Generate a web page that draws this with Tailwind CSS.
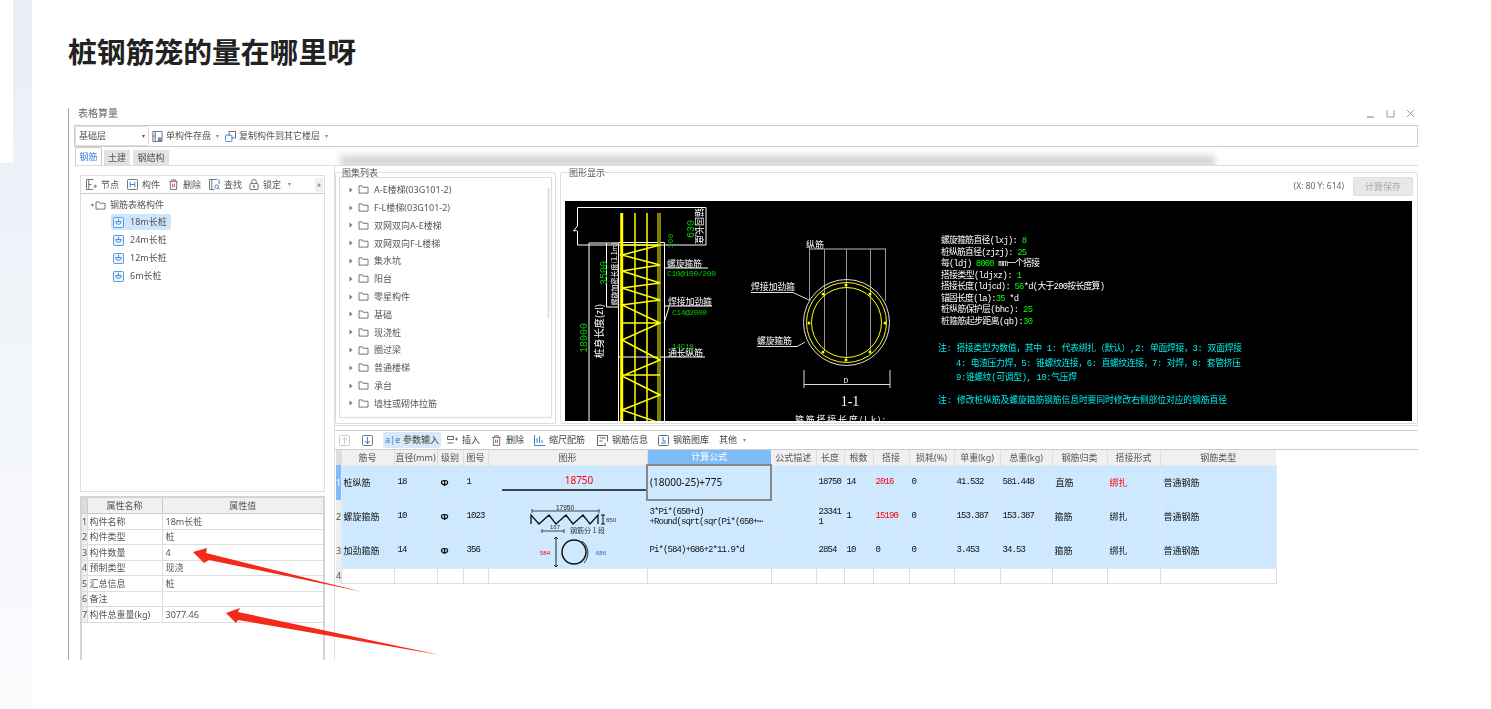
<!DOCTYPE html>
<html lang="zh">
<head>
<meta charset="UTF-8">
<title>桩钢筋笼的量在哪里呀</title>
<script src="https://cdn.jsdelivr.net/npm/@tailwindcss/browser@4"></script>
</head>
<body class="bg-white font-['Noto_Sans','Noto_Sans_CJK_SC',sans-serif] text-[9px] text-[#555]">

<svg class="hidden">
  <symbol id="folder" viewBox="0 0 12 10"><path d="M1 1h3.500l1 1.500H11V9H1z" fill="none" stroke="#666" stroke-width="1"/></symbol>
  <symbol id="caret" viewBox="0 0 4 6"><path d="M0.500 0.500L3.500 3L0.500 5.500z" fill="#777"/></symbol>
  <symbol id="pile" viewBox="0 0 12 12"><rect x="0.500" y="0.500" width="11" height="11" rx="1" fill="#e8f3ff" stroke="#4a90d9"/><path d="M6 2v3M3 5h6M3 5a3 3 0 0 0 6 0" fill="none" stroke="#3b82c4"/></symbol>
  <symbol id="save" viewBox="0 0 12 12"><path d="M1 .5h10v11H1zM3.500 .5v11M1 5.500h2.500" fill="none" stroke="#666"/><rect x="6.500" y="7" width="4" height="4" fill="#4a90d9"/></symbol>
  <symbol id="copy" viewBox="0 0 12 12"><rect x="4.500" y=".5" width="7" height="7" fill="#fff" stroke="#666"/><rect x=".5" y="4.500" width="7" height="7" rx="1" fill="#fff" stroke="#2f7fd0"/></symbol>
  <symbol id="trash" viewBox="0 0 10 12"><path d="M.5 2.500h9M3 2.500V.8h4v1.700M1.500 2.500v9h7v-9" fill="none" stroke="#666"/><path d="M4 5v4M6 5v4" stroke="#d33" stroke-width="1"/></symbol>
  <symbol id="node" viewBox="0 0 12 12"><path d="M8 .5H.5v11H8M3 .5v11M3 6h3" fill="none" stroke="#666"/><path d="M8 8h4M10 6v4" stroke="#3b82c4"/></symbol>
  <symbol id="part" viewBox="0 0 12 12"><rect x=".5" y=".5" width="11" height="11" rx="1" fill="none" stroke="#666"/><path d="M3.500 3v6M8.500 3v6M3.500 6h5" stroke="#3b82c4" fill="none"/></symbol>
  <symbol id="find" viewBox="0 0 12 12"><path d="M9 .5H.5v11H6M3 .5v11M11 .5v5" fill="none" stroke="#666"/><circle cx="8.500" cy="8.500" r="2" fill="none" stroke="#3b82c4"/><path d="M10 10l1.500 1.500" stroke="#3b82c4"/></symbol>
  <symbol id="lock" viewBox="0 0 10 12"><rect x=".5" y="5" width="9" height="6.500" rx="1" fill="none" stroke="#666"/><path d="M2.500 5V3a2.500 2.500 0 0 1 5 0v2" fill="none" stroke="#666"/><rect x="4" y="7" width="2" height="2.500" fill="#3b82c4"/></symbol>
</svg>

<div class="relative flex h-[709px] overflow-hidden">
  <!-- left rail -->
  <div class="w-[32px] shrink-0 bg-gradient-to-b from-[#e9eef6] to-[#fafbfd]">
    <div class="h-[163px] w-[13px] bg-white"></div>
  </div>

  <div class="pl-[36px]">
    <h1 class="h-[40px] mt-[32px] text-[28.800px] leading-[40px] font-bold text-[#222]">桩钢筋笼的量在哪里呀</h1>

    <!-- pasted app window -->
    <div class="mt-[36px] flex h-[552px] w-[1350px] flex-col overflow-hidden border-l border-[#aaa] pl-[5px] blur-[0.25px]">
      <div class="flex h-[17px] shrink-0 items-start justify-between pl-[4px] pr-[3px] text-[#666]">
        <span class="text-[10px] leading-[11px]">表格算量</span>
        <div class="flex items-center gap-[11px] pt-[1px]">
          <svg class="h-[9px] w-[9px]" viewBox="0 0 9 9"><path d="M1 8h7" stroke="#777"/></svg>
          <svg class="h-[9px] w-[9px]" viewBox="0 0 9 9"><path d="M1 1v7h7V1" fill="none" stroke="#999"/></svg>
          <svg class="h-[9px] w-[9px]" viewBox="0 0 9 9"><path d="M1 1l7 7M8 1l-7 7" stroke="#999"/></svg>
        </div>
      </div>

      <!-- top toolbar -->
      <div class="flex h-[22px] shrink-0 items-center border border-[#ccc]">
        <div class="flex h-[20px] w-[74px] items-center justify-between rounded-[2px] border border-[#ddd] pl-[3px] pr-[3px]">
          <span>基础层</span><span class="text-[6px]">▾</span>
        </div>
        <svg class="ml-[3px] h-[11px] w-[11px]"><use href="#save"/></svg>
        <span class="ml-[3px]">单构件存盘</span><span class="ml-[5px] text-[6px] text-[#888]">▾</span>
        <svg class="ml-[6px] h-[11px] w-[11px]"><use href="#copy"/></svg>
        <span class="ml-[3px]">复制构件到其它楼层</span><span class="ml-[5px] text-[6px] text-[#888]">▾</span>
      </div>

      <!-- tabs -->
      <div class="flex h-[18px] shrink-0 items-end overflow-hidden pl-[1px]">
        <div class="flex h-[18px] w-[27px] items-center justify-center rounded-t-[2px] border border-b-0 border-[#ccc] text-[#3b82d8]">钢筋</div>
        <div class="ml-[2px] flex h-[15px] w-[26px] items-center justify-center bg-[#e2e2e2]">土建</div>
        <div class="ml-[3px] flex h-[15px] w-[36px] items-center justify-center bg-[#e2e2e2]">钢结构</div>
        <div class="ml-[171px] -mb-[3px] h-[13px] w-[875px] bg-[#d8d8d8] blur-[3px]"></div>
      </div>

      <!-- body -->
      <div class="flex min-h-0 flex-1 border-t border-[#ddd] bg-white">
        <!-- left column -->
        <div class="flex w-[261px] shrink-0 flex-col border-r border-[#ddd] pl-[6px] pr-[9px] pt-[9px]">
          <div class="flex h-[317px] shrink-0 flex-col border border-[#ddd]">
            <div class="flex h-[18px] shrink-0 items-center border-b border-[#ccc] pl-[5px]">
              <svg class="h-[11px] w-[11px]"><use href="#node"/></svg><span class="ml-[4px]">节点</span>
              <svg class="ml-[8px] h-[11px] w-[11px]"><use href="#part"/></svg><span class="ml-[4px]">构件</span>
              <svg class="ml-[9px] h-[11px] w-[9px]"><use href="#trash"/></svg><span class="ml-[5px]">删除</span>
              <svg class="ml-[8px] h-[11px] w-[11px]"><use href="#find"/></svg><span class="ml-[4px]">查找</span>
              <svg class="ml-[7px] h-[11px] w-[10px]"><use href="#lock"/></svg><span class="ml-[4px]">锁定</span>
              <span class="ml-[7px] text-[6px] text-[#888]">▾</span>
              <span class="ml-auto mr-[1px] flex h-[14px] w-[8px] items-center justify-center bg-[#f0f0f0] text-[7px] leading-none">»</span>
            </div>
            <div class="flex h-[20px] items-center pl-[10px] pt-[2px]">
              <span class="text-[6px] text-[#777]">▾</span>
              <svg class="ml-[1px] h-[9px] w-[11px]"><use href="#folder"/></svg>
              <span class="ml-[4px]">钢筋表格构件</span>
            </div>
            <div class="ml-[30px] flex h-[16px] w-[60px] items-center rounded-[2px] bg-[#cfe5fb] pl-[2px]"><svg class="h-[11px] w-[11px]"><use href="#pile"/></svg><span class="ml-[6px]">18m长桩</span></div>
            <div class="ml-[30px] mt-[2px] flex h-[16px] items-center pl-[2px]"><svg class="h-[11px] w-[11px]"><use href="#pile"/></svg><span class="ml-[6px]">24m长桩</span></div>
            <div class="ml-[30px] mt-[2px] flex h-[16px] items-center pl-[2px]"><svg class="h-[11px] w-[11px]"><use href="#pile"/></svg><span class="ml-[6px]">12m长桩</span></div>
            <div class="ml-[30px] mt-[2px] flex h-[16px] items-center pl-[2px]"><svg class="h-[11px] w-[11px]"><use href="#pile"/></svg><span class="ml-[6px]">6m长桩</span></div>
          </div>

          <div class="mt-[4px] flex-1 border-x-2 border-t-2 border-[#d4d4d4]">
            <table class="w-full table-fixed border-collapse">
              <colgroup><col class="w-[5px]"><col class="w-[75px]"><col></colgroup>
              <tr class="h-[15.500px] bg-[#f0f0f0]"><th class="border-b border-r border-[#ccc] bg-[#ddd]"></th><th class="border-b border-r border-[#ccc] font-normal">属性名称</th><th class="border-b border-[#ccc] font-normal">属性值</th></tr>
              <tr class="h-[15.500px]"><td class="overflow-hidden border-b border-r border-[#ddd] bg-[#eee]">1</td><td class="border-b border-r border-[#ddd] pl-[2px]">构件名称</td><td class="border-b border-[#ddd] pl-[3px]">18m长桩</td></tr>
              <tr class="h-[15.500px]"><td class="overflow-hidden border-b border-r border-[#ddd] bg-[#eee]">2</td><td class="border-b border-r border-[#ddd] pl-[2px]">构件类型</td><td class="border-b border-[#ddd] pl-[3px]">桩</td></tr>
              <tr class="h-[15.500px]"><td class="overflow-hidden border-b border-r border-[#ddd] bg-[#eee]">3</td><td class="border-b border-r border-[#ddd] pl-[2px]">构件数量</td><td class="border-b border-[#ddd] pl-[3px]">4</td></tr>
              <tr class="h-[15.500px]"><td class="overflow-hidden border-b border-r border-[#ddd] bg-[#eee]">4</td><td class="border-b border-r border-[#ddd] pl-[2px]">预制类型</td><td class="border-b border-[#ddd] pl-[3px]">现浇</td></tr>
              <tr class="h-[15.500px]"><td class="overflow-hidden border-b border-r border-[#ddd] bg-[#eee]">5</td><td class="border-b border-r border-[#ddd] pl-[2px]">汇总信息</td><td class="border-b border-[#ddd] pl-[3px]">桩</td></tr>
              <tr class="h-[15.500px]"><td class="overflow-hidden border-b border-r border-[#ddd] bg-[#eee]">6</td><td class="border-b border-r border-[#ddd] pl-[2px]">备注</td><td class="border-b border-[#ddd] pl-[3px]"></td></tr>
              <tr class="h-[15.500px]"><td class="overflow-hidden border-b border-r border-[#ddd] bg-[#eee]">7</td><td class="border-b border-r border-[#ddd] pl-[2px]">构件总重量(kg)</td><td class="border-b border-[#ddd] pl-[3px]">3077.46</td></tr>
            </table>
          </div>
        </div>

        <!-- right column -->
        <div class="flex min-w-0 flex-1 flex-col">
          <div class="flex h-[260px] shrink-0 gap-[4px] border-b border-[#ddd] pt-[2px]">
            <!-- atlas list -->
            <fieldset class="mb-[1px] w-[221px] shrink-0 rounded-[2px] border border-[#ddd] px-[3px] pb-[5px]">
              <legend class="ml-[3px] h-[9px] leading-[9px]">图集列表</legend>
              <div class="relative h-full overflow-hidden border border-[#ddd] pl-[9px] pt-[3px]">
                <div class="absolute left-[207px] top-[10px] h-[130px] w-[3px] bg-[#e8e8e8]"></div>
                <div class="flex h-[17.800px] items-center gap-[5px]"><svg class="h-[6px] w-[4px]"><use href="#caret"/></svg><svg class="h-[9px] w-[11px]"><use href="#folder"/></svg><span>A-E楼梯(03G101-2)</span></div>
                <div class="flex h-[17.800px] items-center gap-[5px]"><svg class="h-[6px] w-[4px]"><use href="#caret"/></svg><svg class="h-[9px] w-[11px]"><use href="#folder"/></svg><span>F-L楼梯(03G101-2)</span></div>
                <div class="flex h-[17.800px] items-center gap-[5px]"><svg class="h-[6px] w-[4px]"><use href="#caret"/></svg><svg class="h-[9px] w-[11px]"><use href="#folder"/></svg><span>双网双向A-E楼梯</span></div>
                <div class="flex h-[17.800px] items-center gap-[5px]"><svg class="h-[6px] w-[4px]"><use href="#caret"/></svg><svg class="h-[9px] w-[11px]"><use href="#folder"/></svg><span>双网双向F-L楼梯</span></div>
                <div class="flex h-[17.800px] items-center gap-[5px]"><svg class="h-[6px] w-[4px]"><use href="#caret"/></svg><svg class="h-[9px] w-[11px]"><use href="#folder"/></svg><span>集水坑</span></div>
                <div class="flex h-[17.800px] items-center gap-[5px]"><svg class="h-[6px] w-[4px]"><use href="#caret"/></svg><svg class="h-[9px] w-[11px]"><use href="#folder"/></svg><span>阳台</span></div>
                <div class="flex h-[17.800px] items-center gap-[5px]"><svg class="h-[6px] w-[4px]"><use href="#caret"/></svg><svg class="h-[9px] w-[11px]"><use href="#folder"/></svg><span>零星构件</span></div>
                <div class="flex h-[17.800px] items-center gap-[5px]"><svg class="h-[6px] w-[4px]"><use href="#caret"/></svg><svg class="h-[9px] w-[11px]"><use href="#folder"/></svg><span>基础</span></div>
                <div class="flex h-[17.800px] items-center gap-[5px]"><svg class="h-[6px] w-[4px]"><use href="#caret"/></svg><svg class="h-[9px] w-[11px]"><use href="#folder"/></svg><span>现浇桩</span></div>
                <div class="flex h-[17.800px] items-center gap-[5px]"><svg class="h-[6px] w-[4px]"><use href="#caret"/></svg><svg class="h-[9px] w-[11px]"><use href="#folder"/></svg><span>圈过梁</span></div>
                <div class="flex h-[17.800px] items-center gap-[5px]"><svg class="h-[6px] w-[4px]"><use href="#caret"/></svg><svg class="h-[9px] w-[11px]"><use href="#folder"/></svg><span>普通楼梯</span></div>
                <div class="flex h-[17.800px] items-center gap-[5px]"><svg class="h-[6px] w-[4px]"><use href="#caret"/></svg><svg class="h-[9px] w-[11px]"><use href="#folder"/></svg><span>承台</span></div>
                <div class="flex h-[17.800px] items-center gap-[5px]"><svg class="h-[6px] w-[4px]"><use href="#caret"/></svg><svg class="h-[9px] w-[11px]"><use href="#folder"/></svg><span>墙柱或砌体拉筋</span></div>
                <div class="flex h-[17.800px] items-center gap-[5px]"><svg class="h-[6px] w-[4px]"><use href="#caret"/></svg><svg class="h-[9px] w-[11px]"><use href="#folder"/></svg><span>构造柱</span></div>
              </div>
            </fieldset>

            <!-- drawing -->
            <fieldset class="mb-[1px] min-w-0 flex-1 rounded-[2px] border border-[#ddd] px-[4px]">
              <legend class="ml-[4px] h-[9px] leading-[9px]">图形显示</legend>
              <div class="flex h-[20px] items-center justify-end gap-[9px] pb-[1px]">
                <span class="text-[8.500px] text-[#666]">(X: 80 Y: 614)</span>
                <span class="flex h-[19px] w-[60px] items-center justify-center rounded-[2px] border border-[#ddd] bg-[#e8e8e8] text-[#aaa]">计算保存</span>
              </div>
              <svg class="mt-[4px] block h-[220px] w-[847px] bg-black" viewBox="0 0 847 220">
                <!-- pile elevation -->
                <g stroke="#fff" fill="none" stroke-width="1">
                  <path d="M12.500 6.500H141M12.500 44H141M141 6.500V44M12.500 6.500V25l-4 5 3-.5 1 .5V44"/>
                  <path d="M53.500 220V41.500H99.500V220M24 42V220M24 42H53M41.500 42V106H53"/>
                  <path d="M99 67H143M99 105H147M99 122L104 106M53 156H140"/>
                </g>
                <g stroke="#ff0" fill="none">
                  <path d="M56.700 12V220M94 12V220" stroke-width="3"/>
                  <path d="M70 12V220M82 12V220" stroke-width="1.500"/>
                  <path d="M94 12V220" stroke="#000" stroke-width="1"/>
                  <path d="M57 54L95 44L57 54L95 64L57 70L95 82L57 87L95 99L57 104L95 122L57 139L95 159L57 175L95 194L57 209L95 222M57 44H95M57 122H95M57 174H95M57 221H95" stroke-width="1.500"/>
                </g>
                <g fill="#0c0" font-size="9" font-family="Liberation Mono, monospace">
                  <text transform="translate(129,28) rotate(-90)" text-anchor="middle" font-size="10">630</text>
                  <text transform="translate(107,40) rotate(-90)" font-size="8" text-anchor="middle" y="1">100</text>
                  <text transform="translate(42,72) rotate(-90)" text-anchor="middle" font-size="10">3500</text>
                  <text transform="translate(22,137) rotate(-90)" text-anchor="middle" font-size="10">18000</text>
                  <text x="102" y="75" font-size="8" textLength="49">C10@100/200</text>
                  <text x="107" y="114" font-size="8" textLength="35">C14@2000</text>
                  <text x="107" y="148" font-size="8" textLength="22">14C18</text>
                </g>
                <g fill="#fff" font-size="9" font-family="Noto Sans CJK SC, sans-serif">
                  <text transform="translate(38,130) rotate(-90)" text-anchor="middle" font-size="10">桩身长度(zl)</text>
                  <text transform="translate(52,73) rotate(-90)" text-anchor="middle" font-size="7">螺旋加密长度(1.1m)</text>
                  <text transform="translate(131,25) rotate(90)" text-anchor="middle" font-size="9" textLength="36">锚固长度</text>
                  <text x="102" y="66" textLength="35">螺旋箍筋</text>
                  <text x="103" y="104" textLength="44">焊接加劲箍</text>
                  <text x="103" y="155" textLength="35">通长纵筋</text>
                  <text x="241" y="47">纵筋</text>
                  <text x="186" y="89" textLength="44">焊接加劲箍</text>
                  <text x="192" y="143" textLength="35">螺旋箍筋</text>
                  <text x="230" y="222" textLength="90">箍筋搭接长度(Lk):</text>
                </g>
                <!-- section 1-1 -->
                <g fill="none">
                  <path d="M244.500 48V100M259.500 48V150M281.500 48V160M305.500 48V150M320.500 48V100" stroke="#999"/>
                  <path d="M244 48H321" stroke="#bbb"/>
                  <path d="M186 91.500H228L244 99M192 145.500H232L240 141" stroke="#ddd"/>
                  <circle cx="281.500" cy="121.500" r="43" stroke="#ddd"/>
                  <circle cx="281.500" cy="121.500" r="40" stroke="#ff0"/>
                  <circle cx="281.500" cy="121.500" r="35" stroke="#ff0"/>
                  <path d="M239 169V187M325 169V187M239 183.500H325" stroke="#ddd"/>
                </g>
                <g fill="#ff0">
                  <circle cx="281" cy="84" r="1.500"/><circle cx="258" cy="93" r="1.500"/><circle cx="305" cy="93" r="1.500"/><circle cx="244" cy="122" r="1.500"/><circle cx="320" cy="122" r="1.500"/><circle cx="258" cy="151" r="1.500"/><circle cx="305" cy="151" r="1.500"/><circle cx="281" cy="159" r="1.500"/>
                </g>
                <text x="281" y="182" text-anchor="middle" fill="#fff" font-size="8" font-family="Liberation Mono, monospace">D</text>
                <text x="285" y="205" text-anchor="middle" fill="#fff" font-size="14" font-family="Liberation Serif, serif">1-1</text>
                <!-- parameter notes -->
                <g fill="#fff" font-size="8.800" font-family="Liberation Mono, Noto Sans CJK SC, monospace">
                  <text x="376" y="42" textLength="86">螺旋箍筋直径(lxj): <tspan fill="#0f0">8</tspan></text>
                  <text x="376" y="53.500" textLength="86">桩纵筋直径(zjzj): <tspan fill="#0f0">25</tspan></text>
                  <text x="376" y="65" textLength="99">每(ldj) <tspan fill="#0f0">8000</tspan> mm一个搭接</text>
                  <text x="376" y="76.500" textLength="81">搭接类型(ldjxz):  <tspan fill="#0f0">1</tspan></text>
                  <text x="376" y="88" textLength="164">搭接长度(ldjcd): <tspan fill="#0f0">56</tspan>*d(大于200按长度算)</text>
                  <text x="376" y="99.500" textLength="78">锚固长度(la):<tspan fill="#0f0">35</tspan> *d</text>
                  <text x="376" y="111" textLength="92">桩纵筋保护层(bhc): <tspan fill="#0f0">25</tspan></text>
                  <text x="376" y="122.500" textLength="92">桩箍筋起步距离(qb):<tspan fill="#0f0">30</tspan></text>
                </g>
                <g fill="#0ee" font-size="8.800" font-family="Liberation Mono, Noto Sans CJK SC, monospace">
                  <text x="373" y="150" textLength="304">注: 搭接类型为数值，其中 1: 代表绑扎（默认）,2: 单面焊接，3: 双面焊接</text>
                  <text x="391" y="165" textLength="285">4: 电渣压力焊，5: 锥螺纹连接，6: 直螺纹连接，7: 对焊，8: 套管挤压</text>
                  <text x="391" y="179" textLength="121">9:锥螺纹(可调型), 10:气压焊</text>
                  <text x="373" y="202" textLength="289">注: 修改桩纵筋及螺旋箍筋钢筋信息时要同时修改右侧部位对应的钢筋直径</text>
                </g>
              </svg>
            </fieldset>
          </div>

          <!-- calc toolbar -->
          <div class="mt-[4px] flex h-[20px] shrink-0 items-center border-y border-[#ccc] pl-[4px]">
            <svg class="h-[11px] w-[11px]" viewBox="0 0 11 11"><rect x=".5" y=".5" width="10" height="10" rx="1" fill="none" stroke="#ccc"/><path d="M5.500 9V2.500M3 5l2.500-2.500L8 5" fill="none" stroke="#ccc"/></svg>
            <svg class="ml-[12px] h-[11px] w-[11px]" viewBox="0 0 11 11"><rect x=".5" y=".5" width="10" height="10" rx="1" fill="none" stroke="#777"/><path d="M5.500 2v6.500M3 6l2.500 2.500L8 6" fill="none" stroke="#3b82c4"/></svg>
            <div class="ml-[10px] flex h-[16px] w-[58px] items-center justify-center gap-[3px] rounded-[2px] bg-[#d8e8f8] text-[#444]"><span class="text-[#2f7fd0]">a|e</span><span>参数输入</span></div>
            <svg class="ml-[6px] h-[11px] w-[11px]" viewBox="0 0 11 11"><path d="M.5 1.500h6v3h-6zM.5 8h6" fill="none" stroke="#666"/><path d="M8 4h3M9.500 2.500v3" stroke="#3b82c4"/></svg>
            <span class="ml-[4px] text-[#444]">插入</span>
            <svg class="ml-[12px] h-[11px] w-[9px]"><use href="#trash"/></svg>
            <span class="ml-[5px] text-[#444]">删除</span>
            <svg class="ml-[10px] h-[11px] w-[11px]" viewBox="0 0 11 11"><path d="M.5 0v10.500H11M3 8V3M5.500 8V1M8 8V5" fill="none" stroke="#3b82c4"/></svg>
            <span class="ml-[4px] text-[#444]">缩尺配筋</span>
            <svg class="ml-[12px] h-[11px] w-[11px]" viewBox="0 0 11 11"><path d="M.5.500h10v6M.5.500v10h6M2.500 3h6M2.500 6h3" fill="none" stroke="#666"/><path d="M8 8v3M7 10l1 1 1-1" fill="none" stroke="#3b82c4"/></svg>
            <span class="ml-[4px] text-[#444]">钢筋信息</span>
            <svg class="ml-[10px] h-[11px] w-[11px]" viewBox="0 0 11 11"><rect x=".5" y=".5" width="10" height="10" rx="1" fill="none" stroke="#666"/><path d="M5 2v4h3M3 8h5" fill="none" stroke="#3b82c4"/></svg>
            <span class="ml-[4px] text-[#444]">钢筋图库</span>
            <span class="ml-[10px] text-[#444]">其他</span>
            <span class="ml-[6px] text-[6px] text-[#888]">▾</span>
          </div>

          <!-- calc table -->
          <table class="ml-[1px] w-[940px] table-fixed border-collapse text-[#111]">
            <colgroup>
              <col class="w-[5px]"><col class="w-[53px]"><col class="w-[43px]"><col class="w-[26px]"><col class="w-[25px]"><col class="w-[159px]"><col class="w-[124px]"><col class="w-[45px]"><col class="w-[28px]"><col class="w-[29px]"><col class="w-[36px]"><col class="w-[45px]"><col class="w-[46px]"><col class="w-[52px]"><col class="w-[55px]"><col class="w-[53px]"><col class="w-[116px]">
            </colgroup>
            <tr class="h-[15px] bg-[#f0f0f0] text-center text-[#555]">
              <th class="border-r border-[#ddd] bg-[#ddd]"></th>
              <th class="border-r border-[#ddd] font-normal">筋号</th><th class="border-r border-[#ddd] font-normal">直径(mm)</th><th class="border-r border-[#ddd] font-normal">级别</th><th class="border-r border-[#ddd] font-normal">图号</th><th class="border-r border-[#ddd] font-normal">图形</th>
              <th class="bg-[#7fbbf7] font-normal text-white">计算公式</th>
              <th class="border-r border-[#ddd] font-normal">公式描述</th><th class="border-r border-[#ddd] font-normal">长度</th><th class="border-r border-[#ddd] font-normal">根数</th><th class="border-r border-[#ddd] font-normal">搭接</th><th class="border-r border-[#ddd] font-normal">损耗(%)</th><th class="border-r border-[#ddd] font-normal">单重(kg)</th><th class="border-r border-[#ddd] font-normal">总重(kg)</th><th class="border-r border-[#ddd] font-normal">钢筋归类</th><th class="border-r border-[#ddd] font-normal">搭接形式</th><th class="font-normal">钢筋类型</th>
            </tr>
            <tr class="h-[35px] bg-[#cde8ff]">
              <td class="overflow-hidden bg-[#7fbbf7] text-white">1</td>
              <td class="border border-[#ddeaf5] pl-[2px]">桩纵筋</td>
              <td class="border border-[#ddeaf5] pl-[3px] font-['Liberation_Mono',monospace] tracking-[-0.9px]">18</td>
              <td class="border border-[#ddeaf5] pl-[3px] font-bold">Φ</td>
              <td class="border border-[#ddeaf5] pl-[3px] font-['Liberation_Mono',monospace] tracking-[-0.9px]">1</td>
              <td class="border border-[#ddeaf5] p-0"><svg class="block h-[34px] w-[158px]" viewBox="0 0 158 34"><text x="90" y="18" text-anchor="middle" fill="#f00" font-size="10" font-family="Noto Sans, sans-serif">18750</text><path d="M13 24H157" stroke="#111" stroke-width="1.500"/></svg></td>
              <td class="border-2 border-[#888] pl-[2px] text-[10px]">(18000-25)+775</td>
              <td class="border border-[#ddeaf5]"></td>
              <td class="border border-[#ddeaf5] pl-[2px] font-['Liberation_Mono',monospace] tracking-[-0.9px]">18750</td>
              <td class="border border-[#ddeaf5] pl-[2px] font-['Liberation_Mono',monospace] tracking-[-0.9px]">14</td>
              <td class="border border-[#ddeaf5] pl-[2px] font-['Liberation_Mono',monospace] tracking-[-0.9px] text-[#f00]">2016</td>
              <td class="border border-[#ddeaf5] pl-[2px] font-['Liberation_Mono',monospace] tracking-[-0.9px]">0</td>
              <td class="border border-[#ddeaf5] pl-[2px] font-['Liberation_Mono',monospace] tracking-[-0.9px]">41.532</td>
              <td class="border border-[#ddeaf5] pl-[2px] font-['Liberation_Mono',monospace] tracking-[-0.9px]">581.448</td>
              <td class="border border-[#ddeaf5] pl-[3px]">直筋</td>
              <td class="border border-[#ddeaf5] pl-[2px] text-[#f00]">绑扎</td>
              <td class="border border-[#ddeaf5] pl-[3px]">普通钢筋</td>
            </tr>
            <tr class="h-[34px] bg-[#cde8ff]">
              <td class="overflow-hidden bg-[#eee] text-[#555]">2</td>
              <td class="border border-[#ddeaf5] pl-[2px]">螺旋箍筋</td>
              <td class="border border-[#ddeaf5] pl-[3px] font-['Liberation_Mono',monospace] tracking-[-0.9px]">10</td>
              <td class="border border-[#ddeaf5] pl-[3px] font-bold">Φ</td>
              <td class="border border-[#ddeaf5] pl-[3px] font-['Liberation_Mono',monospace] tracking-[-0.9px]">1023</td>
              <td class="border border-[#ddeaf5] p-0"><svg class="block h-[33px] w-[158px]" viewBox="0 0 158 33">
                <path d="M43 10H110M43 8v4M110 8v4" stroke="#444" fill="none"/>
                <text x="76" y="9" text-anchor="middle" font-size="6.500" fill="#222" font-family="Liberation Sans, sans-serif">17950</text>
                <path d="M42 23V14L50 23L60 14L67 23L77 14L84 23L94 14L101 23L109 14V23" fill="none" stroke="#111" stroke-width="1.300"/>
                <path d="M114 14V23M112 14h4M112 23h4" stroke="#111" fill="none"/>
                <text x="117" y="21" font-size="6" fill="#333" font-family="Liberation Sans, sans-serif">650</text>
                <path d="M53 30H75M53 28v4M75 28v4" stroke="#444" fill="none"/>
                <text x="61" y="28" font-size="6" fill="#333" font-family="Liberation Sans, sans-serif">167</text>
                <text x="81" y="32" font-size="7" fill="#333" font-family="Noto Sans CJK SC, sans-serif">钢筋分 1 段</text>
              </svg></td>
              <td class="overflow-hidden whitespace-nowrap border border-[#ddeaf5] pl-[2px] font-['Liberation_Mono',monospace] leading-[10px] tracking-[-0.9px]">3*Pi*(650+d)<br>+Round(sqrt(sqr(Pi*(650+⋯</td>
              <td class="border border-[#ddeaf5]"></td>
              <td class="border border-[#ddeaf5] pl-[2px] font-['Liberation_Mono',monospace] leading-[10px] tracking-[-0.9px]">23341<br>1</td>
              <td class="border border-[#ddeaf5] pl-[2px] font-['Liberation_Mono',monospace] tracking-[-0.9px]">1</td>
              <td class="border border-[#ddeaf5] pl-[2px] font-['Liberation_Mono',monospace] tracking-[-0.9px] text-[#f00]">15190</td>
              <td class="border border-[#ddeaf5] pl-[2px] font-['Liberation_Mono',monospace] tracking-[-0.9px]">0</td>
              <td class="border border-[#ddeaf5] pl-[2px] font-['Liberation_Mono',monospace] tracking-[-0.9px]">153.387</td>
              <td class="border border-[#ddeaf5] pl-[2px] font-['Liberation_Mono',monospace] tracking-[-0.9px]">153.387</td>
              <td class="border border-[#ddeaf5] pl-[2px]">箍筋</td>
              <td class="border border-[#ddeaf5] pl-[2px]">绑扎</td>
              <td class="border border-[#ddeaf5] pl-[3px]">普通钢筋</td>
            </tr>
            <tr class="h-[34px] bg-[#cde8ff]">
              <td class="overflow-hidden bg-[#eee] text-[#555]">3</td>
              <td class="border border-[#ddeaf5] pl-[2px]">加劲箍筋</td>
              <td class="border border-[#ddeaf5] pl-[3px] font-['Liberation_Mono',monospace] tracking-[-0.9px]">14</td>
              <td class="border border-[#ddeaf5] pl-[3px] font-bold">Φ</td>
              <td class="border border-[#ddeaf5] pl-[3px] font-['Liberation_Mono',monospace] tracking-[-0.9px]">356</td>
              <td class="border border-[#ddeaf5] p-0"><svg class="block h-[33px] w-[158px]" viewBox="0 0 158 33">
                <path d="M67 3V31M65 4l2-2 2 2M65 30l2 2 2-2" stroke="#222" fill="none"/>
                <text x="51" y="20" font-size="6" fill="#f00" font-family="Liberation Sans, sans-serif">584</text>
                <circle cx="85" cy="17" r="12" fill="none" stroke="#111" stroke-width="1.500"/>
                <path d="M93 6a15 15 0 0 1 2 22" fill="none" stroke="#333"/>
                <text x="107" y="20" font-size="6" fill="#2a6fb0" font-family="Liberation Sans, sans-serif">686</text>
              </svg></td>
              <td class="overflow-hidden whitespace-nowrap border border-[#ddeaf5] pl-[2px] font-['Liberation_Mono',monospace] tracking-[-0.9px]">Pi*(584)+686+2*11.9*d</td>
              <td class="border border-[#ddeaf5]"></td>
              <td class="border border-[#ddeaf5] pl-[2px] font-['Liberation_Mono',monospace] tracking-[-0.9px]">2854</td>
              <td class="border border-[#ddeaf5] pl-[2px] font-['Liberation_Mono',monospace] tracking-[-0.9px]">10</td>
              <td class="border border-[#ddeaf5] pl-[2px] font-['Liberation_Mono',monospace] tracking-[-0.9px]">0</td>
              <td class="border border-[#ddeaf5] pl-[2px] font-['Liberation_Mono',monospace] tracking-[-0.9px]">0</td>
              <td class="border border-[#ddeaf5] pl-[2px] font-['Liberation_Mono',monospace] tracking-[-0.9px]">3.453</td>
              <td class="border border-[#ddeaf5] pl-[2px] font-['Liberation_Mono',monospace] tracking-[-0.9px]">34.53</td>
              <td class="border border-[#ddeaf5] pl-[2px]">箍筋</td>
              <td class="border border-[#ddeaf5] pl-[2px]">绑扎</td>
              <td class="border border-[#ddeaf5] pl-[3px]">普通钢筋</td>
            </tr>
            <tr class="h-[15px]">
              <td class="overflow-hidden bg-[#eee] text-[#555]">4</td>
              <td class="border border-[#ddd]"></td><td class="border border-[#ddd]"></td><td class="border border-[#ddd]"></td><td class="border border-[#ddd]"></td><td class="border border-[#ddd]"></td><td class="border border-[#ddd]"></td><td class="border border-[#ddd]"></td><td class="border border-[#ddd]"></td><td class="border border-[#ddd]"></td><td class="border border-[#ddd]"></td><td class="border border-[#ddd]"></td><td class="border border-[#ddd]"></td><td class="border border-[#ddd]"></td><td class="border border-[#ddd]"></td><td class="border border-[#ddd]"></td><td class="border border-[#ddd]"></td>
            </tr>
          </table>
        </div>
      </div>
    </div>
  </div>

  <!-- red annotation arrows over the screenshot -->
  <svg class="pointer-events-none absolute left-0 top-0 h-[709px] w-[1491px]" viewBox="0 0 1491 709">
    <path d="M193 552L207 548L206 553L363 592L209 560L204 563z" fill="#f5291a"/>
    <path d="M226 613L240 608L238 612L440 655L238 620L236 623z" fill="#f5291a"/>
  </svg>
</div>
</body>
</html>
